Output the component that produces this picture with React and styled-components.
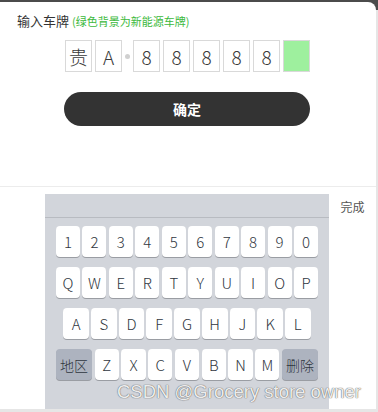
import React from 'react';
import styled, { createGlobalStyle } from 'styled-components';

const GlobalStyle = createGlobalStyle`
  body {
    margin: 0;
    background: #e6e6e6;
    font-family: "Noto Sans CJK SC", "Noto Sans", sans-serif;
  }
`;

const Frame = styled.div`
  position: relative;
  width: 378px;
  height: 412px;
  box-sizing: border-box;
  padding: 2px 2px 3px 0;
  background: linear-gradient(#4b4b4b 0 10px, #e6e6e6 10px);
  overflow: hidden;
`;

const Sheet = styled.div`
  height: 100%;
  background: #fff;
  border-top-right-radius: 8px;
  display: flex;
  flex-direction: column;
`;

const Header = styled.div`
  height: 185px;
  box-sizing: border-box;
  padding: 10px 0 0 17px;
  border-bottom: 1px solid #ececec;
`;

const Title = styled.div`
  font-size: 13px;
  line-height: 18px;
  color: #333;
`;

const Hint = styled.span`
  font-size: 11px;
  color: #3cb93c;
`;

const Plates = styled.div`
  display: flex;
  align-items: center;
  gap: 3px;
  margin: 10px 0 0 48px;
`;

const PlateCell = styled.div`
  width: 27px;
  height: 32px;
  box-sizing: border-box;
  border: 1px solid #d9d9d9;
  background: ${p => (p.green ? '#9ef09e' : '#fff')};
  display: flex;
  align-items: center;
  justify-content: center;
  font-size: 19px;
  font-weight: 300;
  color: #3a3a3a;
`;

const Dot = styled.span`
  width: 5px;
  height: 5px;
  border-radius: 50%;
  background: #d0d0d0;
`;

const Confirm = styled.button`
  display: block;
  width: 246px;
  height: 34px;
  margin: 20px 0 0 47px;
  border: none;
  border-radius: 17px;
  background: #333;
  color: #fff;
  font-family: inherit;
  font-size: 14px;
  font-weight: 700;
`;

const Lower = styled.div`
  flex: 1;
  display: grid;
  grid-template-columns: 45px 284px 1fr;
  padding-top: 7px;
`;

const Keyboard = styled.div`
  grid-column: 2;
  background: #d2d5db;
  display: flex;
  flex-direction: column;
`;

const KeyboardBar = styled.div`
  height: 23px;
  border-bottom: 1px solid #b8bbc1;
`;

const Done = styled.span`
  grid-column: 3;
  justify-self: center;
  margin-top: 4px;
  font-size: 12px;
  color: #555;
`;

const Keys = styled.div`
  display: flex;
  flex-direction: column;
  gap: 10px;
  padding: 8px 11px 0;
`;

const Row = styled.div`
  display: flex;
  justify-content: center;
  gap: ${p => p.gap || '2.6px'};
`;

const Key = styled.div`
  width: ${p => p.w || '23.9px'};
  height: 31px;
  border-radius: 4px;
  background: ${p => (p.special ? '#adb3bf' : '#fff')};
  box-shadow: 0 1px 0 #9a9da3;
  display: flex;
  align-items: center;
  justify-content: center;
  font-size: ${p => (p.special ? '14px' : '15px')};
  font-weight: 300;
  color: #2f3640;
`;

const Watermark = styled.div`
  position: absolute;
  left: 117px;
  top: 381px;
  font-family: "Liberation Sans", Arial, sans-serif;
  font-size: 18.5px;
  color: rgba(255, 255, 255, 0.9);
  text-shadow: 0 0 1px #666, 0 0 1px #666;
  white-space: nowrap;
`;

const plate = ['贵', 'A', '8', '8', '8', '8', '8'];

const App = () => (
  <Frame>
    <GlobalStyle />
    <Sheet>
      <Header>
        <Title>
          输入车牌 <Hint>(绿色背景为新能源车牌)</Hint>
        </Title>
        <Plates>
          {plate.slice(0, 2).map((c, i) => (
            <PlateCell key={i}>{c}</PlateCell>
          ))}
          <Dot />
          {plate.slice(2).map((c, i) => (
            <PlateCell key={i}>{c}</PlateCell>
          ))}
          <PlateCell green />
        </Plates>
        <Confirm>确定</Confirm>
      </Header>

      <Lower>
        <Keyboard>
          <KeyboardBar />
          <Keys>
            <Row>
              {'1234567890'.split('').map(k => (
                <Key key={k}>{k}</Key>
              ))}
            </Row>
            <Row>
              {'QWERTYUIOP'.split('').map(k => (
                <Key key={k}>{k}</Key>
              ))}
            </Row>
            <Row gap="2px">
              {'ASDFGHJKL'.split('').map(k => (
                <Key key={k} w="25.7px">{k}</Key>
              ))}
            </Row>
            <Row gap="2.5px">
              <Key special w="36px">地区</Key>
              {'ZXCVBNM'.split('').map(k => (
                <Key key={k} w="24.3px">{k}</Key>
              ))}
              <Key special w="36px">删除</Key>
            </Row>
          </Keys>
        </Keyboard>
        <Done>完成</Done>
      </Lower>
    </Sheet>
    <Watermark>CSDN @Grocery store owner</Watermark>
  </Frame>
);

export default App;
